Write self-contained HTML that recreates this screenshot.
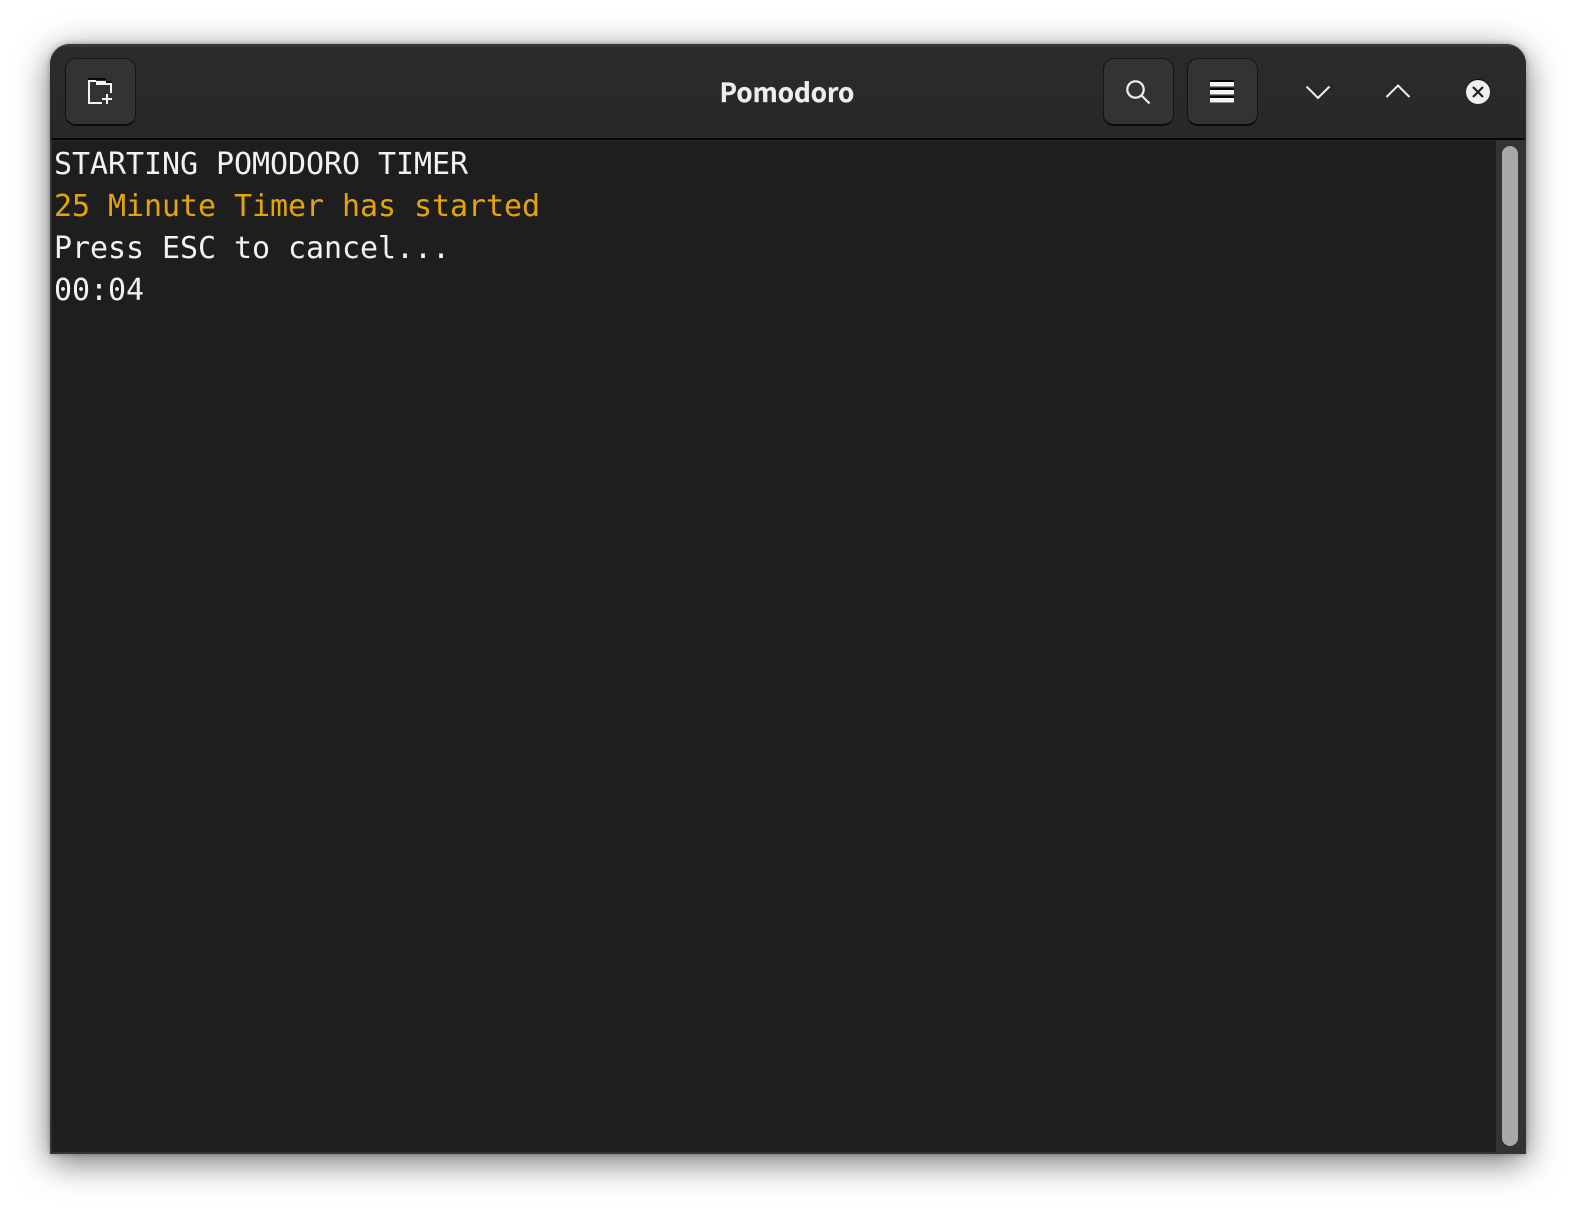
<!DOCTYPE html>
<html><head><meta charset="utf-8"><title>Pomodoro</title>
<style>
html,body{margin:0;padding:0;background:#fff;width:1576px;height:1210px;overflow:hidden}
#win{position:absolute;left:50px;top:44px;width:1476px;height:1110px;border-radius:20px 20px 0 0;background:#1e1e1e;box-shadow:0 8px 34px rgba(0,0,0,.55),0 0 6px rgba(0,0,0,.3);overflow:hidden}
#head{position:absolute;left:0;top:0;width:1476px;height:94px;background:linear-gradient(#2b2b2b,#282828);border-top:3px solid #383838;box-sizing:content-box;margin-top:-3px;top:3px}
#line{position:absolute;left:2px;right:2px;top:94px;height:2px;background:#050505}
#lb,#rb,#bb{position:absolute;background:#333}
#lb{left:0;top:96px;width:2px;bottom:0}
#rb{right:0;top:96px;width:30px;bottom:0}
#bb{left:0;right:0;bottom:0;height:2px}
#thumb{position:absolute;left:1452px;top:102px;width:16px;height:1000px;border-radius:8px;background:#a8a8a6}
.btn{position:absolute;top:58px;width:71px;height:68px;box-sizing:border-box;border-radius:11px;background:#333;border:1px solid #141414;border-bottom:2px solid #0a0a0a}
#title{position:absolute;left:-1px;top:74px;width:1576px;text-align:center;font:700 26px/36px "Noto Sans CJK JP","Liberation Sans",sans-serif;color:#eee;-webkit-text-stroke:.3px #eee}
.t{position:absolute;left:54px;font:30px/42px "DejaVu Sans Mono",monospace;letter-spacing:-.06px;color:#f2f2f2;white-space:pre}
svg{position:absolute;left:0;top:0}
</style></head><body>
<div id="win">
<div id="head"></div><div id="line"></div><div id="lb"></div><div id="rb"></div><div id="bb"></div>
<div id="thumb"></div>
</div>
<div class="btn" style="left:65px"></div>
<div class="btn" style="left:1103px"></div>
<div class="btn" style="left:1187px"></div>
<div id="title">Pomodoro</div>
<div class="t" style="top:144px">STARTING POMODORO TIMER</div>
<div class="t" style="top:186px;color:#e5a50a">25 Minute Timer has started</div>
<div class="t" style="top:228px">Press ESC to cancel...</div>
<div class="t" style="top:270px">00:04</div>
<svg width="1576" height="1210" viewBox="0 0 1576 1210" fill="none">
<!-- new tab -->
<path d="M88 78h18v2H88z" fill="#0a0a0a"/>
<path d="M106 81h6v2h-6z" fill="#0a0a0a"/>
<path d="M88 80h8v2h-6v20h12v2H88z" fill="#f4f4f4"/>
<path d="M96 81h10v4H96z" fill="#f4f4f4"/>
<path d="M106 83h6v10h-2v-8h-4z" fill="#f4f4f4"/>
<path d="M102 98h10v2h-10z M106 94h2v10h-2z" fill="#f4f4f4"/>
<!-- search -->
<circle cx="1135.500" cy="89.500" r="8.200" stroke="#f0f0f0" stroke-width="2.200"/>
<path d="M1141.500 95.500L1149.500 103.500" stroke="#f0f0f0" stroke-width="2.200"/>
<!-- menu -->
<path d="M1210 80h24v2h-24z M1210 88h24v2h-24z M1210 96h24v2h-24z" fill="#050505"/>
<path d="M1210 82h24v4.500h-24z M1210 90h24v4.500h-24z M1210 98h24v4.500h-24z" fill="#f2f2f2"/>
<!-- chevrons -->
<path d="M1306.500 86.500L1318 98L1329.500 86.500" stroke="#efefef" stroke-width="2"/>
<path d="M1386.500 97L1398 85.500L1409.500 97" stroke="#efefef" stroke-width="2"/>
<!-- close -->
<circle cx="1478" cy="91" r="12" fill="#0a0a0a"/>
<circle cx="1478" cy="92" r="12" fill="#eeeeee"/>
<path d="M1473 87L1483 97M1483 87L1473 97" stroke="#222" stroke-width="2.200"/>
</svg>
</body></html>
